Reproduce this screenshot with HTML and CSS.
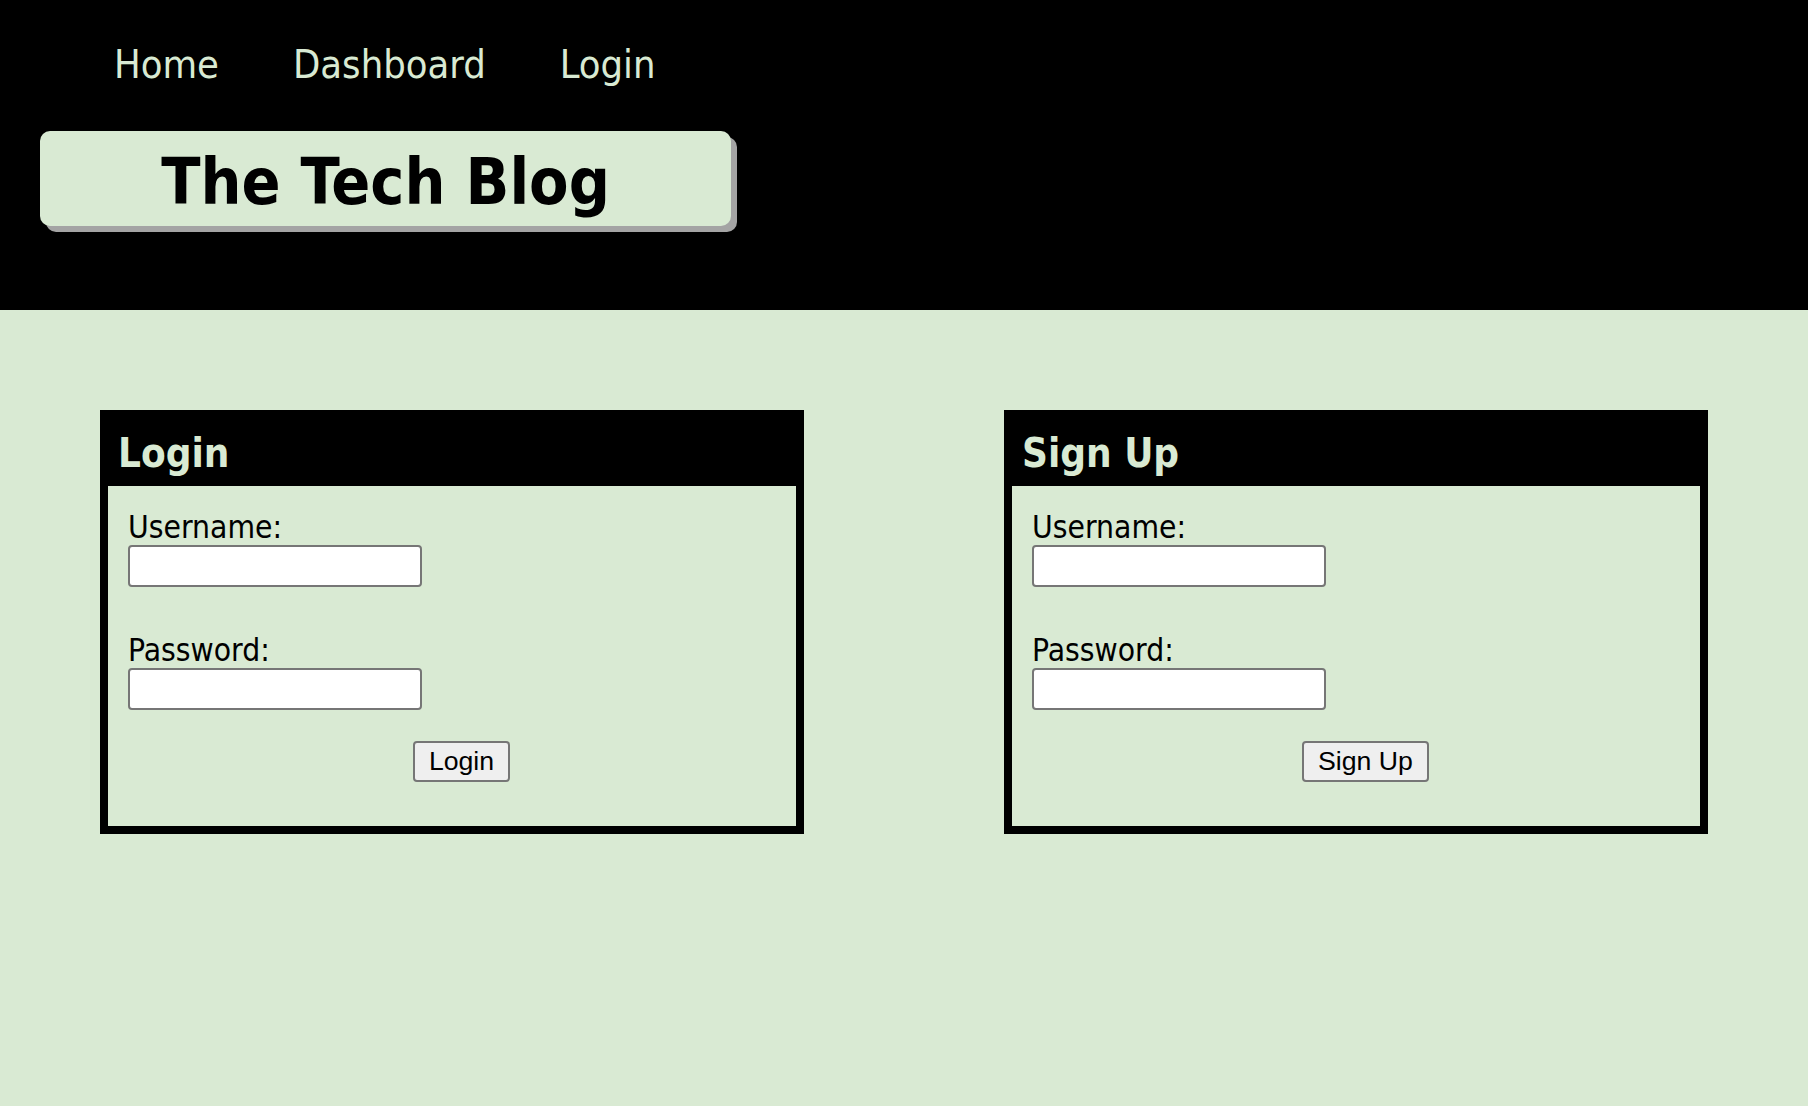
FILE: index.html
```html
<!DOCTYPE html>
<html lang="en">
<head>
<meta charset="utf-8">
<title>The Tech Blog</title>
<link rel="stylesheet" href="styles.css">
</head>
<body>
<header class="site-header">
  <nav class="nav">
    <a class="nav-link" href="#">Home</a>
    <a class="nav-link" href="#">Dashboard</a>
    <a class="nav-link" href="#">Login</a>
  </nav>
  <div class="title-box">
    <h1 class="title">The Tech Blog</h1>
  </div>
</header>
<main class="main">
  <section class="card">
    <div class="card-head"><h2 class="card-title">Login</h2></div>
    <form class="card-body">
      <label class="field-label" for="login-user">Username:</label>
      <input class="field-input" id="login-user" type="text">
      <label class="field-label" for="login-pass">Password:</label>
      <input class="field-input last" id="login-pass" type="password">
      <div class="btn-row"><button class="btn" type="button">Login</button></div>
    </form>
  </section>
  <section class="card">
    <div class="card-head"><h2 class="card-title">Sign Up</h2></div>
    <form class="card-body">
      <label class="field-label" for="su-user">Username:</label>
      <input class="field-input" id="su-user" type="text">
      <label class="field-label" for="su-pass">Password:</label>
      <input class="field-input last" id="su-pass" type="password">
      <div class="btn-row"><button class="btn" type="button">Sign Up</button></div>
    </form>
  </section>
</main>
</body>
</html>
```
FILE: styles.css
```css
html, body {
  margin: 0;
  padding: 0;
}
body {
  background: #d9ead3;
  font-family: "DejaVu Sans Condensed", "DejaVu Sans", sans-serif;
  font-stretch: condensed;
  color: #000;
  min-height: 1106px;
}
.site-header {
  background: #000;
  padding: 40px 0 84px 40px;
}
.nav {
  display: flex;
  gap: 74px;
  padding-left: 74px;
  height: 48px;
  margin-bottom: 43px;
}
.nav-link {
  color: #d9ead3;
  text-decoration: none;
  font-size: 39.5px;
  line-height: 48px;
}
.title-box {
  width: 691px;
  height: 95px;
  box-sizing: border-box;
  background: #d9ead3;
  border-radius: 10px;
  box-shadow: 6px 6px 0 #a4a4a4;
  padding-top: 13px;
}
.title {
  margin: 0;
  text-align: center;
  font-size: 64px;
  line-height: 76px;
  font-weight: bold;
}
.main {
  display: flex;
  justify-content: space-around;
  padding-top: 100px;
}
.card {
  width: 704px;
  box-sizing: border-box;
  border: 8px solid #000;
  border-top-width: 0;
  background: #000;
}
.card-head {
  padding: 19px 8px 9px 10px;
}
.card-title {
  margin: 0;
  color: #d9ead3;
  font-size: 40px;
  line-height: 48px;
  font-weight: bold;
}
.card-body {
  background: #d9ead3;
  padding: 24px 20px 44px;
}
.field-label {
  display: block;
  font-size: 31.5px;
  line-height: 35px;
}
.field-input {
  display: block;
  width: 294px;
  height: 42px;
  box-sizing: border-box;
  margin: 0 0 46px;
  border: 2px solid #767676;
  border-radius: 4px;
  background: #fff;
  padding: 2px 4px;
  font-size: 26px;
}
.field-input.last {
  margin-bottom: 31px;
}
.btn-row {
  text-align: center;
  padding-left: 19px;
}
.btn {
  height: 41px;
  box-sizing: border-box;
  padding: 0 14px;
  border: 2px solid #767676;
  border-radius: 4px;
  background: #efefef;
  color: #000;
  font-family: "Liberation Sans", Arial, sans-serif;
  font-size: 26.67px;
  line-height: 35px;
}
```
